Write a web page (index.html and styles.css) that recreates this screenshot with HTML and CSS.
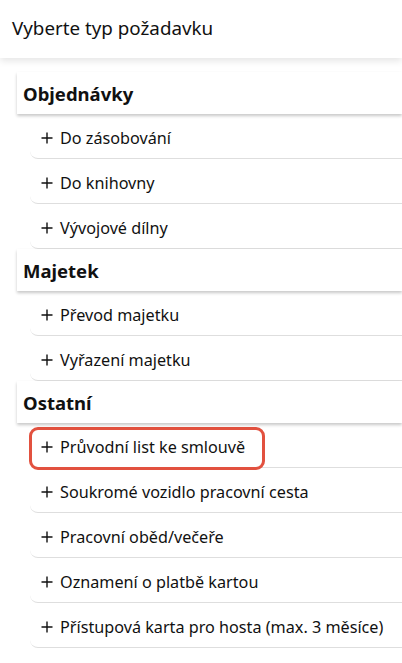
FILE: index.html
```html
<!DOCTYPE html>
<html lang="cs">
<head>
<meta charset="utf-8">
<title>Vyberte typ požadavku</title>
<link rel="stylesheet" href="styles.css">
</head>
<body>
<header class="topbar">Vyberte typ požadavku</header>
<main class="list">
  <section class="group">
    <h2 class="group-title">Objednávky</h2>
    <div class="item"><svg class="plus" viewBox="0 0 12 12"><path d="M6 0.5V11.5M0.5 6H11.5"/></svg><span>Do zásobování</span></div>
    <div class="item"><svg class="plus" viewBox="0 0 12 12"><path d="M6 0.5V11.5M0.5 6H11.5"/></svg><span>Do knihovny</span></div>
    <div class="item"><svg class="plus" viewBox="0 0 12 12"><path d="M6 0.5V11.5M0.5 6H11.5"/></svg><span>Vývojové dílny</span></div>
  </section>
  <section class="group">
    <h2 class="group-title">Majetek</h2>
    <div class="item"><svg class="plus" viewBox="0 0 12 12"><path d="M6 0.5V11.5M0.5 6H11.5"/></svg><span>Převod majetku</span></div>
    <div class="item"><svg class="plus" viewBox="0 0 12 12"><path d="M6 0.5V11.5M0.5 6H11.5"/></svg><span>Vyřazení majetku</span></div>
  </section>
  <section class="group">
    <h2 class="group-title">Ostatní</h2>
    <div class="item highlighted"><svg class="plus" viewBox="0 0 12 12"><path d="M6 0.5V11.5M0.5 6H11.5"/></svg><span>Průvodní list ke smlouvě</span><span class="mark"></span></div>
    <div class="item"><svg class="plus" viewBox="0 0 12 12"><path d="M6 0.5V11.5M0.5 6H11.5"/></svg><span>Soukromé vozidlo pracovní cesta</span></div>
    <div class="item"><svg class="plus" viewBox="0 0 12 12"><path d="M6 0.5V11.5M0.5 6H11.5"/></svg><span>Pracovní oběd/večeře</span></div>
    <div class="item"><svg class="plus" viewBox="0 0 12 12"><path d="M6 0.5V11.5M0.5 6H11.5"/></svg><span>Oznamení o platbě kartou</span></div>
    <div class="item"><svg class="plus" viewBox="0 0 12 12"><path d="M6 0.5V11.5M0.5 6H11.5"/></svg><span>Přístupová karta pro hosta (max. 3 měsíce)</span></div>
  </section>
</main>
</body>
</html>
```
FILE: styles.css
```css
* { box-sizing: border-box; }
html, body {
  margin: 0;
  padding: 0;
  background: #ffffff;
  font-family: "Noto Sans", "Open Sans", sans-serif;
  color: #111111;
  overflow: hidden;
}
.topbar {
  height: 58px;
  display: flex;
  align-items: center;
  padding: 0 0 3px 12px;
  font-size: 18.8px;
  font-weight: 400;
  background: #ffffff;
  box-shadow: 0 3px 7px rgba(0, 0, 0, 0.10);
  position: relative;
  z-index: 2;
}
.list {
  margin: 14px 0 0 17px;
}
.group-title {
  margin: 0;
  height: 42px;
  display: flex;
  align-items: center;
  padding: 0 0 0 6px;
  font-size: 18.5px;
  font-weight: 700;
  background: #ffffff;
  box-shadow: 0 2px 3px rgba(0, 0, 0, 0.22);
  position: relative;
  z-index: 1;
}
.item {
  margin-left: 13px;
  height: 45px;
  display: flex;
  align-items: center;
  gap: 7px;
  padding: 4px 0 0 11px;
  font-size: 16.2px;
  border-bottom: 1px solid #dedede;
  border-bottom-left-radius: 8px;
  position: relative;
}
.plus {
  width: 12px;
  height: 12px;
  flex: none;
  fill: none;
  stroke: #111111;
  stroke-width: 1.4;
}
.highlighted .mark {
  position: absolute;
  left: -1px;
  top: 4px;
  width: 236px;
  height: 43px;
  border: 3px solid #e2513f;
  border-radius: 9px;
}
```
